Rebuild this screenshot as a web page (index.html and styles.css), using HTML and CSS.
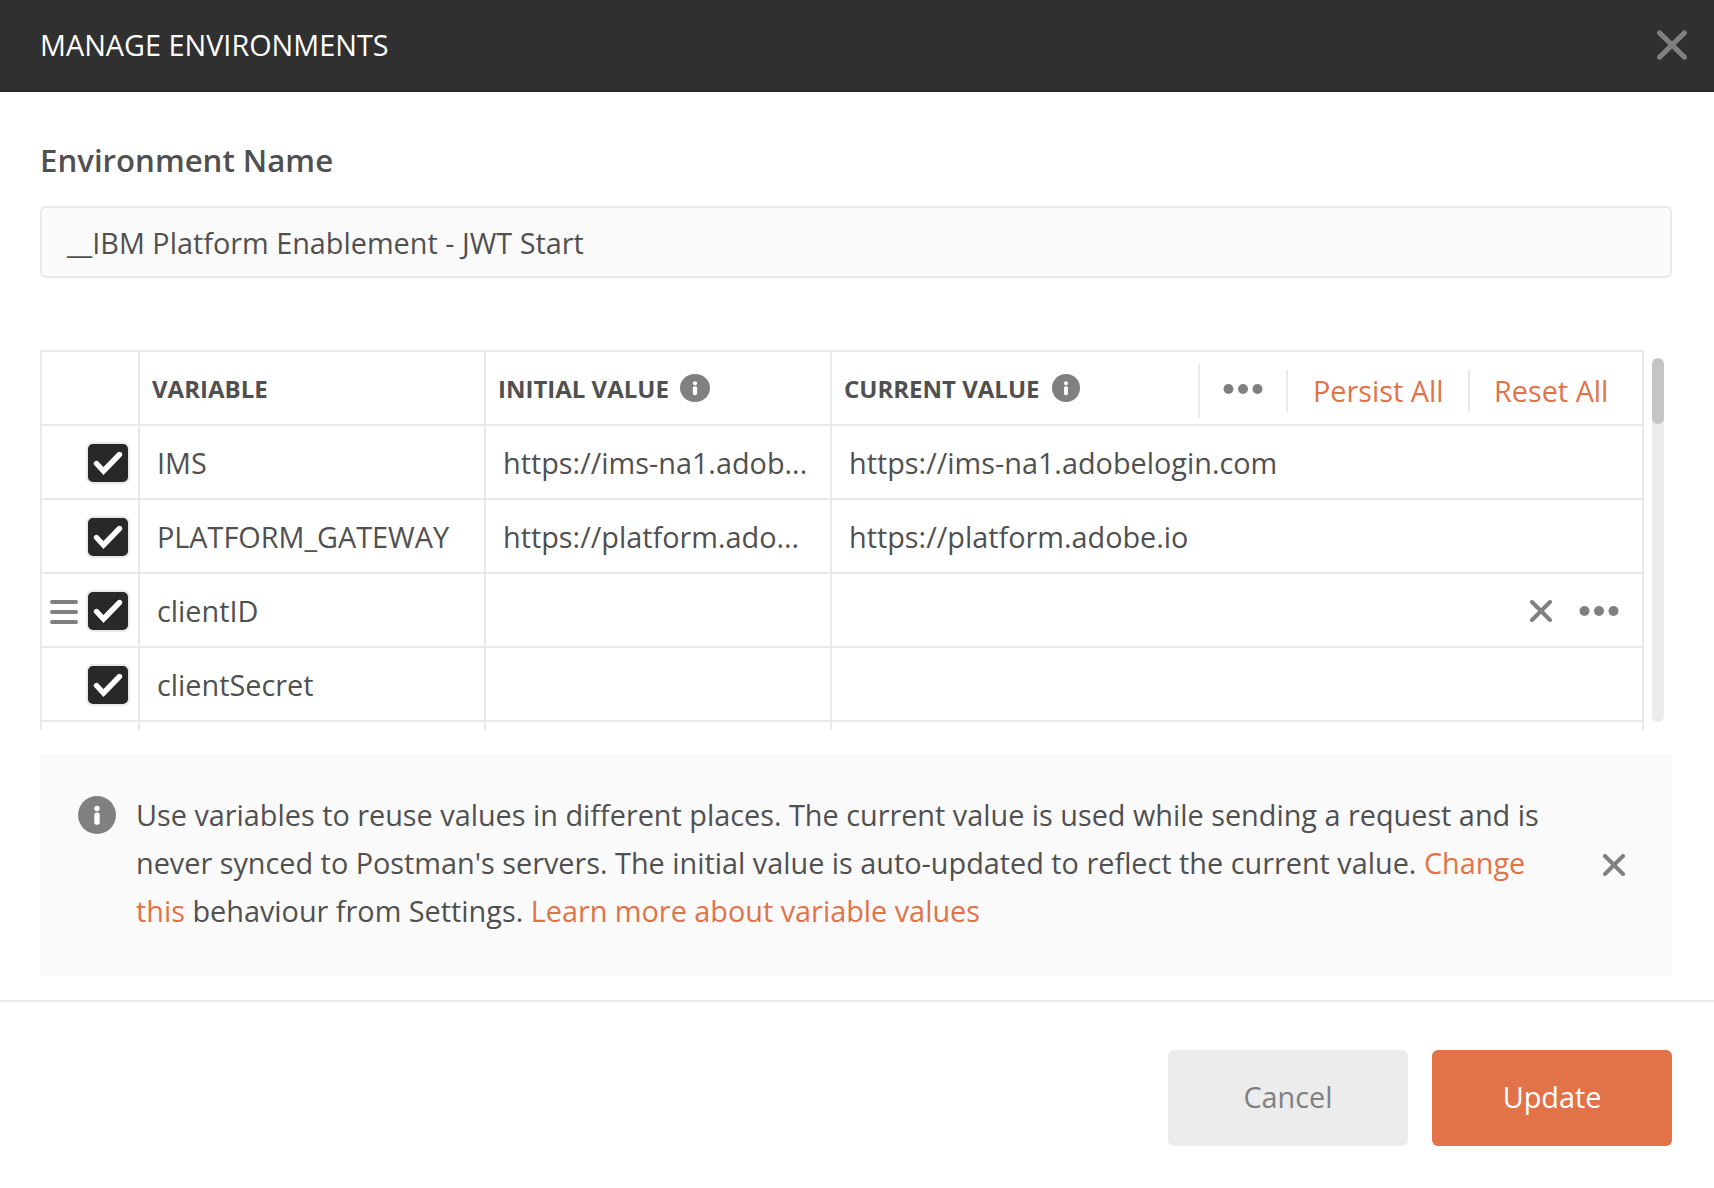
FILE: index.html
```html
<!DOCTYPE html>
<html lang="en">
<head>
<meta charset="utf-8">
<title>Manage Environments</title>
<link rel="stylesheet" href="styles.css">
</head>
<body>
<svg class="sprite" aria-hidden="true">
  <symbol id="check" viewBox="0 0 40 38"><path d="M8.5 19.5 15.5 27 31.5 10.5" fill="none" stroke="#fff" stroke-width="5.4" stroke-linecap="round" stroke-linejoin="miter"/></symbol>
  <symbol id="info" viewBox="0 0 28 28" preserveAspectRatio="none"><circle cx="14" cy="14" r="14" fill="#808080"/><circle cx="14" cy="9.2" r="2" fill="#fff"/><rect x="12" y="12.2" width="4" height="9" rx="1.6" fill="#fff"/></symbol>
  <symbol id="dots" viewBox="0 0 40 10"><circle cx="5.5" cy="5" r="5" fill="#808080"/><circle cx="20" cy="5" r="5" fill="#808080"/><circle cx="34.5" cy="5" r="5" fill="#808080"/></symbol>
  <symbol id="cross" viewBox="0 0 22 22"><path d="M2 2 20 20M20 2 2 20" fill="none" stroke="#808080" stroke-width="4" stroke-linecap="round"/></symbol>
</svg>
<div class="modal">
  <header class="modal-header">
    <h1 class="modal-title">MANAGE ENVIRONMENTS</h1>
    <svg class="modal-close" viewBox="0 0 30 30"><path d="M2.6 2.9 27.4 27.1M27.4 2.9 2.6 27.1" fill="none" stroke="#808080" stroke-width="5" stroke-linecap="round"/></svg>
  </header>
  <main class="modal-body">
    <div class="label">Environment Name</div>
    <div class="name-input">__IBM Platform Enablement - JWT Start</div>
    <section class="variables">
      <div class="grid">
        <div class="row head">
          <div class="cell ctl"></div>
          <div class="cell">VARIABLE</div>
          <div class="cell">INITIAL VALUE<svg class="info wide"><use href="#info"/></svg></div>
          <div class="cell">CURRENT VALUE<svg class="info"><use href="#info"/></svg>
            <div class="head-actions">
              <div class="more"><svg class="dots"><use href="#dots"/></svg></div>
              <div class="link persist">Persist All</div>
              <div class="link reset">Reset All</div>
            </div>
          </div>
        </div>
        <div class="row">
          <div class="cell ctl"><svg class="checkbox"><use href="#check"/></svg></div>
          <div class="cell">IMS</div>
          <div class="cell">https://ims-na1.adob...</div>
          <div class="cell">https://ims-na1.adobelogin.com</div>
        </div>
        <div class="row">
          <div class="cell ctl"><svg class="checkbox"><use href="#check"/></svg></div>
          <div class="cell">PLATFORM_GATEWAY</div>
          <div class="cell">https://platform.ado...</div>
          <div class="cell">https://platform.adobe.io</div>
        </div>
        <div class="row">
          <div class="cell ctl"><div class="handle"><i></i><i></i><i></i></div><svg class="checkbox"><use href="#check"/></svg></div>
          <div class="cell">clientID</div>
          <div class="cell"></div>
          <div class="cell"><div class="row-actions"><svg class="cross"><use href="#cross"/></svg><svg class="dots"><use href="#dots"/></svg></div></div>
        </div>
        <div class="row">
          <div class="cell ctl"><svg class="checkbox"><use href="#check"/></svg></div>
          <div class="cell">clientSecret</div>
          <div class="cell"></div>
          <div class="cell"></div>
        </div>
        <div class="row">
          <div class="cell ctl"></div>
          <div class="cell"></div>
          <div class="cell"></div>
          <div class="cell"></div>
        </div>
      </div>
      <div class="scrollbar"><div class="thumb"></div></div>
    </section>
    <section class="notice">
      <svg class="notice-icon"><use href="#info"/></svg>
      <p class="notice-text">Use variables to reuse values in different places. The current value is used while sending a request and is never synced to Postman's servers. The initial value is auto-updated to reflect the current value. <span class="link">Change this</span> behaviour from Settings. <span class="link">Learn more about variable values</span></p>
      <svg class="cross"><use href="#cross"/></svg>
    </section>
  </main>
  <footer class="modal-footer">
    <button class="btn cancel">Cancel</button>
    <button class="btn update">Update</button>
  </footer>
</div>
</body>
</html>
```
FILE: styles.css
```css
* { box-sizing: border-box; }
body {
  margin: 0;
  background: #fff;
  color: #505050;
  font: 28.82px/38px "Open Sans", sans-serif;
}
svg { display: block; flex: none; }
.sprite { display: none; }
.modal { display: flex; flex-direction: column; height: 1188px; overflow: hidden; }
.link { color: #e27248; }

.modal-header {
  display: flex;
  align-items: center;
  justify-content: space-between;
  height: 92px;
  padding: 0 27px 0 40px;
  background: #303030;
  border-bottom: 2px solid #282828;
}
.modal-title { margin: 0; color: #fff; font-size: 28.82px; font-weight: 400; }
.modal-close { width: 30px; height: 30px; }

.modal-body { height: 908px; padding: 48px 42px 0 40px; }
.label { height: 66px; font-size: 31.2px; line-height: 40px; font-weight: 600; }
.name-input {
  height: 72px;
  padding: 16px 25px;
  background: #fafafa;
  border: 2px solid #e9e9e9;
  border-radius: 6px;
}

.variables { display: flex; gap: 8px; height: 380px; margin-top: 72px; overflow: hidden; }
.grid {
  width: 1604px;
  border: solid #e9e9e9;
  border-width: 2px 2px 0;
}
.row {
  display: grid;
  grid-template-columns: 98px 346px 346px 1fr;
  height: 74px;
  border-bottom: 2px solid #e9e9e9;
}
.cell {
  display: flex;
  align-items: center;
  min-width: 0;
  padding: 2px 10px 0 17px;
  border-right: 2px solid #e9e9e9;
  white-space: nowrap;
}
.cell:last-child { border-right: 0; }
.head .cell { padding: 2px 0 0 12px; font-size: 24px; font-weight: 700; }
.row .ctl { justify-content: flex-end; gap: 8px; padding: 2px 8px 0 0; }

.checkbox {
  width: 44px;
  height: 42px;
  background: #282828;
  border: 2px solid #e9e9e9;
  border-radius: 7px;
}
.handle { display: grid; gap: 6px; width: 28px; margin-top: 2px; }
.handle i { height: 4px; background: #808080; border-radius: 2px; }

.info { width: 28px; height: 28px; margin: -2px 0 0 12px; }
.info.wide { width: 30px; margin-left: 11px; }
.dots { width: 40px; height: 10px; }
.cross { width: 22px; height: 22px; }

.head-actions { display: flex; margin: 4px 34px 0 auto; font-size: 28.82px; font-weight: 400; }
.more { width: 88px; height: 54px; padding: 20px 0 0 23px; border-left: 2px solid #e9e9e9; }
.persist, .reset { height: 42px; margin-top: 6px; border-left: 2px solid #e9e9e9; padding: 2px 0 0 24px; }
.persist { width: 182px; padding-left: 25px; }
.reset { width: 140px; }
.row-actions { display: flex; align-items: center; gap: 27px; margin: 0 13px 0 auto; }

.scrollbar { width: 12px; height: 364px; margin-top: 8px; background: #ececec; border-radius: 6px; }
.thumb { height: 66px; background: #c5c5c5; border-radius: 6px; }

.notice {
  display: flex;
  height: 222px;
  margin-top: 24px;
  padding: 38px 47px 0 38px;
  background: #fafafa;
}
.notice-icon { width: 38px; height: 38px; margin-top: 4px; }
.notice-text { width: 1410px; margin: -1px 0 0 20px; line-height: 48px; }
.notice .cross { margin: 62px 0 0 auto; }

.modal-footer {
  display: flex;
  justify-content: flex-end;
  gap: 24px;
  height: 188px;
  padding: 48px 42px 0;
  border-top: 2px solid #e9e9e9;
}
.btn {
  width: 240px;
  height: 96px;
  padding: 0 0 2px;
  border: 0;
  border-radius: 6px;
  font: inherit;
}
.cancel { background: #ececec; color: #808080; }
.update { background: #e27248; color: #fff; }
```
